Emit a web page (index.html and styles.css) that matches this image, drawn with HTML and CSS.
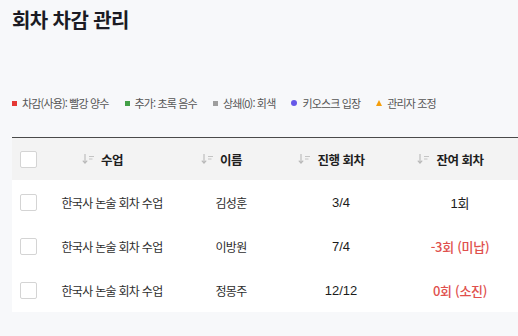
FILE: index.html
```html
<!DOCTYPE html>
<html lang="ko">
<head>
<meta charset="utf-8">
<link rel="stylesheet" href="styles.css">
</head>
<body>
<div class="page">
  <h1 class="title">회차 차감 관리</h1>
  <ul class="legend">
    <li><span class="mark sq red"></span>차감(사용): 빨강 양수</li>
    <li><span class="mark sq green"></span>추가: 초록 음수</li>
    <li><span class="mark sq gray"></span>상쇄(0): 회색</li>
    <li><span class="mark dot"></span>키오스크 입장</li>
    <li><span class="mark tri"></span>관리자 조정</li>
  </ul>
  <div class="table-wrap">
    <table class="grid">
      <colgroup>
        <col class="c-check"><col class="c-class"><col class="c-name"><col class="c-prog"><col class="c-rest">
      </colgroup>
      <thead>
        <tr>
          <th class="check"><span class="box"></span></th>
          <th><span class="sortable"><svg class="sort" viewBox="0 0 13 12" width="13" height="12"><path d="M3 1v9M0.8 7.6L3 10.2 5.2 7.6" fill="none" stroke="#b8b8b8" stroke-width="1.1"/><path d="M7 3.5h5M7 6h3.5" stroke="#c4c4c4" stroke-width="1"/></svg>수업</span></th>
          <th><span class="sortable"><svg class="sort" viewBox="0 0 13 12" width="13" height="12"><path d="M3 1v9M0.8 7.6L3 10.2 5.2 7.6" fill="none" stroke="#b8b8b8" stroke-width="1.1"/><path d="M7 3.5h5M7 6h3.5" stroke="#c4c4c4" stroke-width="1"/></svg>이름</span></th>
          <th><span class="sortable"><svg class="sort" viewBox="0 0 13 12" width="13" height="12"><path d="M3 1v9M0.8 7.6L3 10.2 5.2 7.6" fill="none" stroke="#b8b8b8" stroke-width="1.1"/><path d="M7 3.5h5M7 6h3.5" stroke="#c4c4c4" stroke-width="1"/></svg>진행 회차</span></th>
          <th><span class="sortable"><svg class="sort" viewBox="0 0 13 12" width="13" height="12"><path d="M3 1v9M0.8 7.6L3 10.2 5.2 7.6" fill="none" stroke="#b8b8b8" stroke-width="1.1"/><path d="M7 3.5h5M7 6h3.5" stroke="#c4c4c4" stroke-width="1"/></svg>잔여 회차</span></th>
        </tr>
      </thead>
      <tbody>
        <tr>
          <td class="check"><span class="box"></span></td>
          <td>한국사 논술 회차 수업</td>
          <td>김성훈</td>
          <td class="num">3/4</td>
          <td class="num">1회</td>
        </tr>
        <tr>
          <td class="check"><span class="box"></span></td>
          <td>한국사 논술 회차 수업</td>
          <td>이방원</td>
          <td class="num">7/4</td>
          <td class="num warn">-3회 (미납)</td>
        </tr>
        <tr>
          <td class="check"><span class="box"></span></td>
          <td>한국사 논술 회차 수업</td>
          <td>정몽주</td>
          <td class="num">12/12</td>
          <td class="num warn">0회 (소진)</td>
        </tr>
      </tbody>
    </table>
  </div>
</div>
</body>
</html>
```

FILE: styles.css
```css
html, body {
  margin: 0;
  padding: 0;
  background: #f7f8fa;
  overflow: hidden;
}
body {
  font-family: "Liberation Sans", Arial, "Noto Sans CJK KR", sans-serif;
  color: #333;
}
.page {
  padding: 8px 0 0 12px;
}
.title {
  margin: 0;
  font-family: "Noto Sans CJK KR", sans-serif;
  font-size: 20px;
  line-height: 24px;
  font-weight: 700;
  color: #1b1b24;
  letter-spacing: -0.6px;
}
.legend {
  list-style: none;
  margin: 63px 0 0;
  padding: 0;
  display: flex;
  gap: 16px;
  font-size: 11px;
  line-height: 16px;
  color: #555;
  font-family: "Noto Sans CJK KR", sans-serif;
  letter-spacing: -0.85px;
}
.legend li {
  display: flex;
  align-items: center;
  gap: 5px;
}
.mark {
  display: inline-block;
  width: 5px;
  height: 5px;
}
.sq.red { background: #e53935; }
.sq.green { background: #43a047; }
.sq.gray { background: #9e9e9e; }
.dot { background: #6658e8; border-radius: 50%; width: 6px; height: 6px; }
.tri {
  width: 0;
  height: 0;
  border-left: 3.5px solid transparent;
  border-right: 3.5px solid transparent;
  border-bottom: 6px solid #f59e0b;
}
.table-wrap {
  margin-top: 26px;
  width: 516px;
}
.grid {
  border-collapse: collapse;
  table-layout: fixed;
  width: 516px;
  font-size: 13px;
}
.c-check { width: 40px; }
.c-class { width: 120px; }
.c-name { width: 118px; }
.c-prog { width: 102px; }
.c-rest { width: 136px; }
.grid thead tr {
  background: #f3f3f3;
  border-top: 1px solid #4a4a4a;
}
.grid th {
  height: 42px;
  padding: 0;
  font-weight: 700;
  color: #1e1e1e;
  text-align: center;
  font-family: "Noto Sans CJK KR", sans-serif;
  font-size: 12.5px;
  letter-spacing: -0.5px;
}
.grid td {
  height: 44px;
  padding: 0;
  text-align: center;
  background: #fff;
  font-family: "Noto Sans CJK KR", sans-serif;
  font-size: 12px;
  letter-spacing: -0.7px;
  color: #2e2e2e;
}
.grid td.num {
  font-family: "Liberation Sans", "Noto Sans CJK KR", sans-serif;
  font-size: 13px;
  letter-spacing: 0;
  color: #1c1c1c;
}
.grid td.warn {
  color: #e0504d;
  font-weight: 500;
  font-family: "Noto Sans CJK KR", sans-serif;
  letter-spacing: -0.3px;
}
.grid .check {
  text-align: left;
  padding-left: 8px;
}
.box {
  display: block;
  width: 15px;
  height: 15px;
  border: 1px solid #d4d4d4;
  border-radius: 2px;
  background: #fff;
}
.sortable {
  position: relative;
  display: inline-block;
}
.sort {
  position: absolute;
  right: 100%;
  top: 50%;
  margin-top: -6px;
  margin-right: 6px;
}
```
